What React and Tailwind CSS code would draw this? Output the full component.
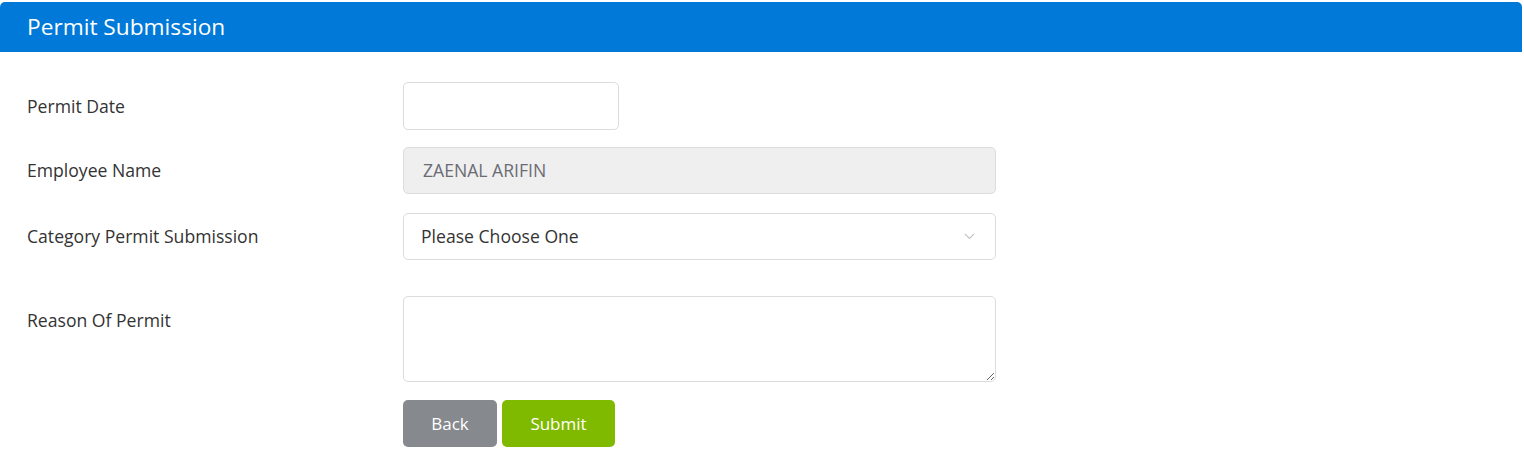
// Permit submission form

export default function App() {
  var labelCls = "w-[403px] shrink-0 pl-[27px] text-[17.6px] text-[#333]"
  var boxCls = "h-[48px] rounded-[5px] border border-[#dcdcdf] bg-white"

  return (
    <div className="min-h-[464px] bg-white pt-[2px]" style={{ fontFamily: '"Open Sans", sans-serif' }}>
      <div className="mr-[2px] h-[50px] rounded-t-[5px] bg-[#0079d8] flex items-center pl-[27px]">
        <h1 className="text-[22.7px] text-white">Permit Submission</h1>
      </div>

      <div className="pt-[30px]">
        {/* permit date */}
        <div className="flex items-center">
          <label className={labelCls}>Permit Date</label>
          <input type="text" className={`${boxCls} w-[216px] px-[18px] outline-none`} />
        </div>

        {/* employee name */}
        <div className="flex items-center mt-[17px]">
          <label className={labelCls}>Employee Name</label>
          <div className="h-[47px] w-[593px] rounded-[5px] border border-[#dcdcdf] bg-[#efefef] flex items-center pl-[19px] text-[17.6px] text-[#6b6b73]">
            ZAENAL ARIFIN
          </div>
        </div>

        {/* category */}
        <div className="flex items-center mt-[19px]">
          <label className={labelCls}>Category Permit Submission</label>
          <div className="h-[47px] w-[593px] rounded-[5px] border border-[#dcdcdf] bg-white flex items-center justify-between pl-[17px] pr-[20px] text-[17.6px] text-[#333]">
            <span>Please Choose One</span>
            <svg width="11" height="7" viewBox="0 0 11 7" fill="none">
              <path d="M1 1l4.5 4.5L10 1" stroke="#c4c4c8" strokeWidth="1.1" />
            </svg>
          </div>
        </div>

        {/* reason */}
        <div className="flex items-start mt-[36px]">
          <label className={`${labelCls} pt-[11px]`}>Reason Of Permit</label>
          <textarea className="h-[86px] w-[593px] rounded-[5px] border border-[#dcdcdf] bg-white px-[18px] py-[10px] outline-none"></textarea>
        </div>

        {/* buttons */}
        <div className="flex mt-[18px] pl-[403px] gap-[5px]">
          <button className="h-[47px] w-[94px] rounded-[5px] bg-[#86898e] text-white text-[17px]">Back</button>
          <button className="h-[47px] w-[113px] rounded-[5px] bg-[#7fba00] text-white text-[17px]">Submit</button>
        </div>
      </div>
    </div>
  )
}
